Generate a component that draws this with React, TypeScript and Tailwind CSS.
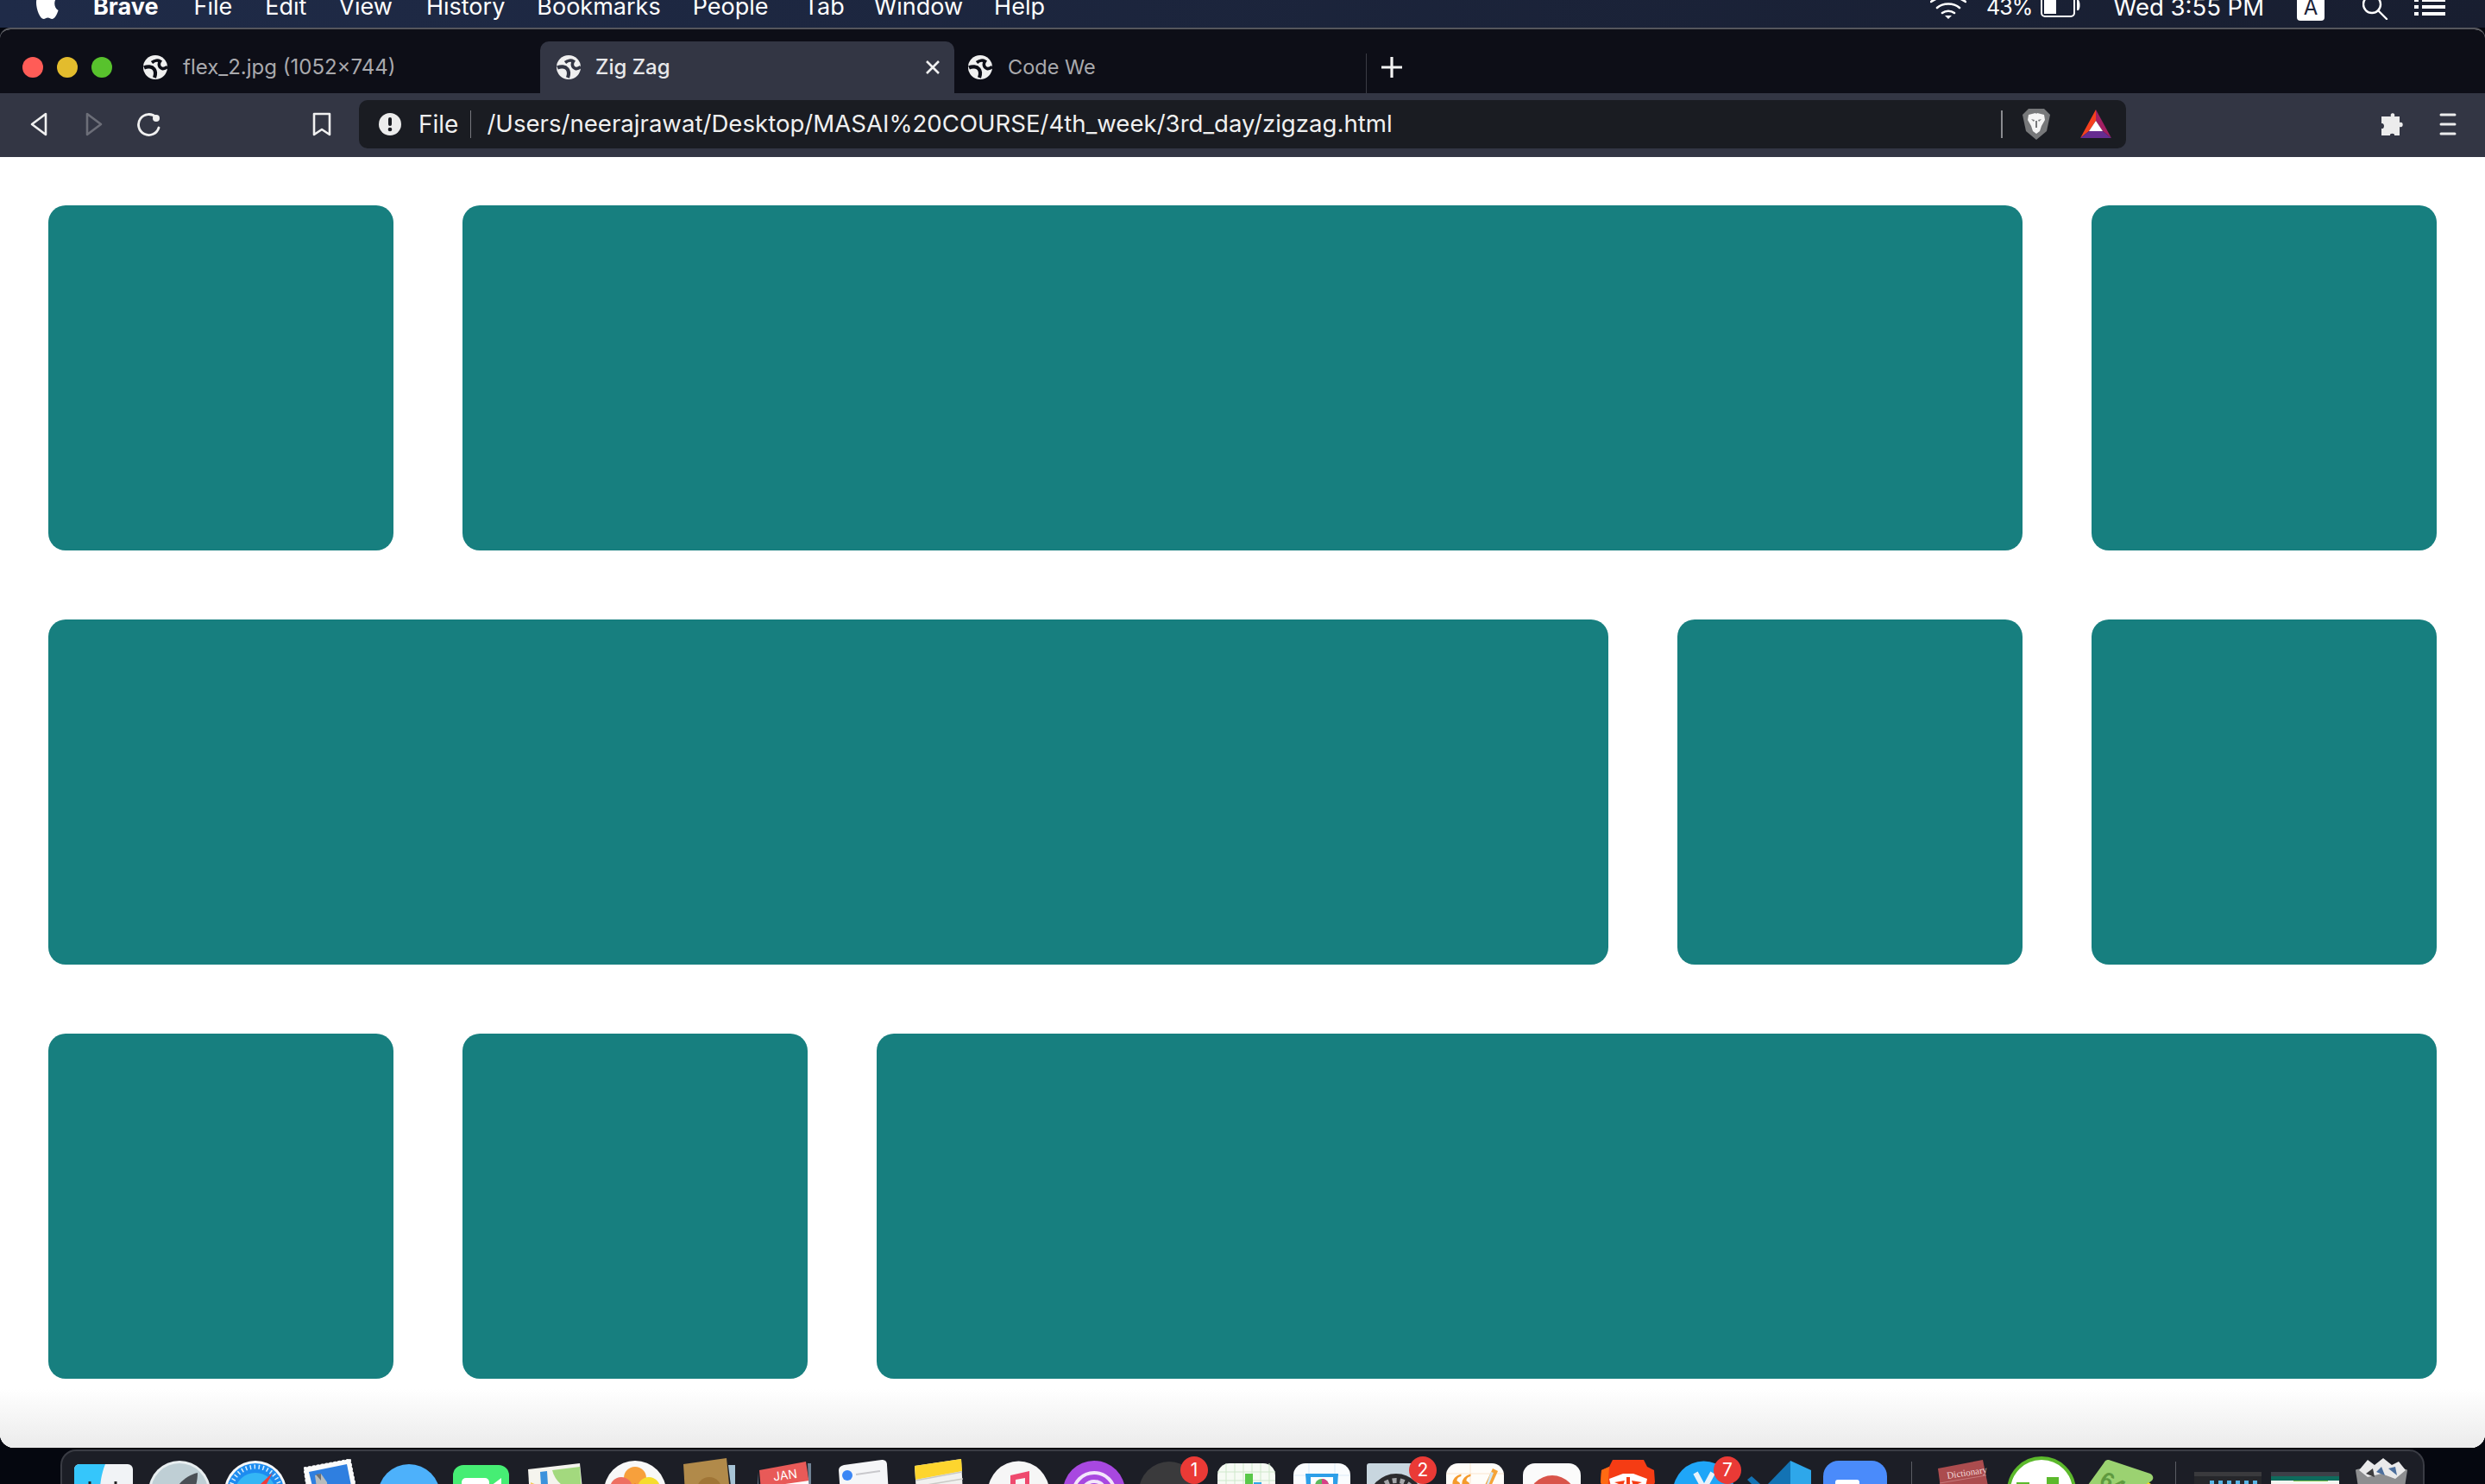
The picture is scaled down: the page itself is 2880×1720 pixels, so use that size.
import React from "react";

const Globe = ({ c = "#0d0e17" }: { c?: string }) => (
  <svg width="30" height="30" viewBox="0 0 30 30" className="shrink-0">
    <circle cx="15" cy="15" r="14" fill="#f0f0f0" />
    <path d="M2 15.500C6 13.500 11 14 13.500 17C15 19 15.500 23 14 27" fill="none" stroke={c} strokeWidth="4.200" />
    <path d="M11 9.500C14 7 18 6.500 20.500 8C18.500 11 19 15 23 16.500C25 17 27 16 29 14.500" fill="none" stroke={c} strokeWidth="3.600" />
  </svg>
);

const Box = ({ className }: { className: string }) => (
  <div className={`h-[400px] rounded-[20px] bg-[#177f7f] ${className}`} />
);

const MenuItem = ({ children, className }: { children: React.ReactNode; className: string }) => (
  <span className={`shrink-0 ${className}`}>{children}</span>
);

const Badge = ({ n, className }: { n: string; className: string }) => (
  <span className={`absolute top-[6px] flex h-[32px] w-[32px] items-center justify-center rounded-full bg-[#ea3a36] text-[21px] text-white ${className}`}>
    {n}
  </span>
);

const Dock = () => (
  <div className="relative ml-[70px] mt-[2px] flex h-[40px] w-[2740px] items-start overflow-hidden rounded-t-[18px] border-x-2 border-t-2 border-[#3a3c44] bg-[#1c1e26]">
    {/* Finder */}
    <svg width="68" height="40" className="ml-[14px] mt-[15px] shrink-0">
      <rect width="68" height="60" rx="6" fill="#f1f3f6" />
      <path d="M6 0H36C32 10 30 20 29 40H0V6A6 6 0 0 1 6 0Z" fill="#35c6fb" />
      <path d="M18 20V30M48 20V30" stroke="#222" strokeWidth="3" />
    </svg>
    {/* Launchpad */}
    <svg width="72" height="40" className="ml-[18px] mt-[11px] shrink-0">
      <circle cx="36" cy="36" r="36" fill="#e8eef0" />
      <circle cx="36" cy="36" r="33" fill="#bfcfd5" />
      <path d="M57 14C44 17 34 26 28 40H50C54 33 57 25 57 14Z" fill="#4a4f55" />
    </svg>
    {/* Safari */}
    <svg width="72" height="40" className="ml-[16px] mt-[11px] shrink-0">
      <circle cx="36" cy="36" r="36" fill="#f5f7f8" />
      <circle cx="36" cy="36" r="33" fill="#1d8cf0" />
      <circle cx="36" cy="38" r="24" fill="#34b6f5" />
      <circle cx="36" cy="36" r="29" fill="none" stroke="#d8eefc" strokeWidth="5" strokeDasharray="1.5 3.5" />
      <path d="M56 14L28 40H42Z" fill="#ef3b3b" />
    </svg>
    {/* Mail */}
    <svg width="60" height="40" className="ml-[20px] mt-[9px] shrink-0">
      <path d="M0 10L54 0L60 30V40H4Z" fill="#fbfbfb" stroke="#fff" strokeWidth="1" strokeDasharray="3 2" />
      <path d="M6 15L50 6L56 36V40H12Z" fill="#2f7fe0" />
      <path d="M13 19L20 17L27 27L28 40H16Z" fill="#b8bcbc" />
      <path d="M14 18L20 17L20 25Z" fill="#6d7072" />
    </svg>
    {/* Messages */}
    <svg width="72" height="40" className="ml-[26px] mt-[15px] shrink-0">
      <ellipse cx="36" cy="36" rx="36" ry="36" fill="#4db1fb" />
    </svg>
    {/* FaceTime */}
    <svg width="65" height="40" className="ml-[15px] mt-[16px] shrink-0">
      <rect width="65" height="60" rx="12" fill="#46ee74" />
      <rect x="10" y="15" width="32" height="24" rx="5" fill="#fff" />
      <path d="M44 24L56 15V40H44Z" fill="#fff" />
    </svg>
    {/* Maps */}
    <svg width="64" height="40" className="ml-[22px] mt-[14px] shrink-0">
      <path d="M0 7L60 0L64 40H2Z" fill="#f5f4ee" />
      <path d="M14 10L22 9L24 40H16Z" fill="#3b92dc" />
      <path d="M28 8L60 4L62 32C46 32 32 24 28 8Z" fill="#a3d97e" />
      <path d="M3 22L12 26L16 40H4Z" fill="#f5cb52" />
    </svg>
    {/* Photos */}
    <svg width="72" height="40" className="ml-[24px] mt-[11px] shrink-0">
      <circle cx="36" cy="36" r="36" fill="#f8f8f8" />
      <circle cx="36" cy="20" r="13" fill="#f7a03c" />
      <circle cx="20" cy="32" r="13" fill="#ee6f62" />
      <circle cx="52" cy="32" r="13" fill="#f6dc2e" />
      <path d="M28 40L36 26L44 40Z" fill="#df5a25" />
    </svg>
    {/* Contacts */}
    <svg width="60" height="40" className="ml-[20px] mt-[8px] shrink-0">
      <path d="M0 7L50 0L54 40H2Z" fill="#b18a4a" />
      <path d="M52 8L60 8V40H56Z" fill="#a7c4d6" />
      <circle cx="30" cy="36" r="14" fill="#a07536" />
      <circle cx="30" cy="36" r="6" fill="#7f5a28" />
    </svg>
    {/* Calendar */}
    <svg width="62" height="40" className="ml-[26px] mt-[12px] shrink-0">
      <path d="M2 10L56 0L60 26L4 34Z" fill="#e85a58" />
      <path d="M4 30L60 22V40H4Z" fill="#fff" />
      <path d="M16 34H44V40H16Z" fill="#222" />
      <path d="M0 12L2 40H0ZM58 2L62 2V40H60Z" fill="#6f8294" />
      <text x="18" y="21" fontSize="14" fill="#fff" fontFamily="Inter, sans-serif" transform="rotate(-8 30 16)">JAN</text>
    </svg>
    {/* Reminders */}
    <svg width="58" height="40" className="ml-[32px] mt-[10px] shrink-0">
      <path d="M6 6L50 0C54 0 56 2 56 6L58 40H2L0 12C0 9 2 7 6 6Z" fill="#f5f6f8" />
      <circle cx="10" cy="18" r="6" fill="#3a86f5" />
      <path d="M20 17L48 13M20 34L48 30" stroke="#c8c8cc" strokeWidth="2" />
    </svg>
    {/* Notes */}
    <svg width="56" height="40" className="ml-[30px] mt-[9px] shrink-0">
      <path d="M0 8L54 0L56 40H2Z" fill="#f1f1ef" />
      <path d="M0 8L54 0L55 14L1 24Z" fill="#fdd52e" />
      <path d="M1 25L55 15M2 32L56 23" stroke="#c9c9c5" strokeWidth="1.5" />
    </svg>
    {/* Music */}
    <svg width="71" height="40" className="ml-[29px] mt-[11px] shrink-0">
      <circle cx="35.500" cy="36" r="35.500" fill="#f6f6f6" />
      <path d="M26 17L48 12V40H26Z" fill="#ef4a6e" />
      <path d="M32 22L43 20V28L32 30Z" fill="#f6f6f6" />
    </svg>
    {/* Podcasts */}
    <svg width="72" height="40" className="ml-[16px] mt-[11px] shrink-0">
      <circle cx="36" cy="36" r="36" fill="#a848e0" />
      <circle cx="36" cy="38" r="24" fill="none" stroke="#f3e6fb" strokeWidth="4" />
      <circle cx="36" cy="38" r="14" fill="none" stroke="#f3e6fb" strokeWidth="4" />
    </svg>
    {/* Dark clock */}
    <svg width="70" height="40" className="ml-[16px] mt-[11px] shrink-0">
      <circle cx="35" cy="36" r="35" fill="#3a3a3c" />
      <path d="M26 34L22 40M44 34L48 40" stroke="#eee" strokeWidth="3" />
    </svg>
    {/* Numbers */}
    <svg width="67" height="40" className="ml-[21px] mt-[14px] shrink-0">
      <rect width="67" height="60" rx="14" fill="#f6fbf4" />
      <path d="M0 10H67M0 20H67M10 0V40M20 0V40M30 0V40M40 0V40M50 0V40M60 0V40" stroke="#cfe8cb" strokeWidth="1" />
      <rect x="22" y="28" width="9" height="12" fill="#f2a33a" />
      <rect x="32" y="12" width="9" height="28" fill="#59c84a" />
      <rect x="42" y="22" width="9" height="18" fill="#2fa8e8" />
    </svg>
    {/* Keynote */}
    <svg width="66" height="40" className="ml-[21px] mt-[14px] shrink-0">
      <rect width="66" height="60" rx="14" fill="#fafcfe" />
      <path d="M0 14H66M18 0V40M48 0V40" stroke="#d9e9f6" strokeWidth="1" />
      <path d="M14 12H52L50 40H16Z" fill="#2d9fe8" />
      <rect x="20" y="16" width="26" height="24" fill="#fff" />
      <circle cx="33" cy="26" r="8" fill="#5cb85c" />
      <path d="M33 18A8 8 0 0 1 40 30L33 26Z" fill="#d83f87" />
    </svg>
    {/* SysPrefs */}
    <svg width="66" height="40" className="ml-[19px] mt-[14px] shrink-0">
      <rect width="66" height="60" rx="3" fill="#c8d6df" />
      <circle cx="34" cy="44" r="32" fill="#2b2b2d" />
      <circle cx="34" cy="44" r="24" fill="none" stroke="#a5a7aa" strokeWidth="6" strokeDasharray="5 4" />
    </svg>
    {/* Pages */}
    <svg width="67" height="40" className="ml-[26px] mt-[14px] shrink-0">
      <rect width="67" height="60" rx="14" fill="#fffdf9" />
      <path d="M0 12H67M28 0V40" stroke="#fbe6cf" strokeWidth="1" />
      <text x="5" y="46" fontSize="50" fill="#f49a2c" fontFamily="Liberation Serif, serif" fontWeight="700">“</text>
      <path d="M54 6L60 9L46 40H38Z" fill="#f5a337" />
      <path d="M52 10L55 11L44 38H42Z" fill="#cfe6f6" />
    </svg>
    {/* Chrome */}
    <svg width="67" height="40" className="ml-[22px] mt-[14px] shrink-0">
      <rect width="67" height="60" rx="14" fill="#fbfbfb" />
      <circle cx="34" cy="42" r="28" fill="#d9544a" />
      <path d="M34 42L62 32V50H40Z" fill="#e8b93c" />
      <path d="M34 42L6 36L6 70H34Z" fill="#47a85a" />
      <circle cx="34" cy="42" r="13" fill="#fff" />
    </svg>
    {/* Brave */}
    <svg width="63" height="40" className="ml-[23px] mt-[10px] shrink-0">
      <path d="M14 0H50L54 8L62 12L63 26L58 40H6L0 26L1 12L10 8Z" fill="#f53c14" />
      <path d="M0 26L1 12L10 8L8 40H6Z" fill="#ff6a12" />
      <path d="M10 22L26 16H38L54 22L50 40H14Z" fill="#fff" />
      <path d="M16 26L28 24L26 30ZM48 26L36 24L38 30Z" fill="#f53c14" />
      <path d="M30 20H34V38H30Z" fill="#f53c14" />
    </svg>
    {/* App Store */}
    <svg width="71" height="40" className="ml-[21px] mt-[11px] shrink-0">
      <circle cx="35.500" cy="36" r="35.500" fill="#1fa6f8" />
      <path d="M26 14L38 36M46 14L34 36" fill="none" stroke="#e9f2fa" strokeWidth="6" />
    </svg>
    {/* VS Code */}
    <svg width="75" height="40" className="ml-[15px] mt-[11px] shrink-0">
      <path d="M50 0L74 11V27H50Z" fill="#2ea7ea" />
      <path d="M50 0V27H24Z" fill="#1373b4" />
      <path d="M0 22L5 18L15 27H5Z" fill="#1373b4" />
    </svg>
    {/* Zoom */}
    <svg width="74" height="40" className="ml-[13px] mt-[11px] shrink-0">
      <rect width="74" height="60" rx="18" fill="#4a8bfb" />
      <rect x="14" y="22" width="28" height="12" rx="3" fill="#fff" />
    </svg>
    <div className="ml-[28px] mt-[12px] h-[30px] w-[1px] shrink-0 bg-[#5a5c63]" />
    {/* Dictionary */}
    <svg width="64" height="40" className="ml-[30px] mt-[10px] shrink-0">
      <path d="M0 10L52 0L60 40H4Z" fill="#ab4c4e" />
      <path d="M2 27L56 18" stroke="#c77a7b" strokeWidth="1" />
      <text x="10" y="19" fontSize="11" fill="#f3d9d9" fontFamily="Liberation Serif, serif" transform="rotate(-9 30 14)">Dictionary</text>
    </svg>
    {/* uTorrent */}
    <svg width="80" height="40" className="ml-[16px] mt-[6px] shrink-0">
      <circle cx="40" cy="40" r="38" fill="#fff" stroke="#5cb92c" strokeWidth="4" />
      <path d="M11 30H26V40H11ZM46 24H60V40H46Z" fill="#5cb92c" />
    </svg>
    {/* 64 bit */}
    <svg width="84" height="40" className="ml-[6px] mt-[10px] shrink-0">
      <path d="M32 0L80 16C84 18 84 22 82 24L60 40H0L26 4C28 0 30 0 32 0Z" fill="#9bd271" />
      <path d="M78 26L84 30L70 40H62Z" fill="#f4de1e" />
      <text x="22" y="38" fontSize="26" fontWeight="700" fill="#5f9a3f" fontFamily="Liberation Sans, sans-serif" transform="rotate(30 40 28)">64</text>
    </svg>
    <div className="ml-[25px] mt-[12px] h-[30px] w-[1px] shrink-0 bg-[#5a5c63]" />
    {/* Window thumbs */}
    <svg width="78" height="40" className="ml-[21px] mt-[24px] shrink-0">
      <rect width="78" height="20" fill="#26272b" />
      <rect width="78" height="5" fill="#3a3a3d" />
      <path d="M18 10h5v5h-5zM28 10h5v5h-5zM38 10h5v5h-5zM48 10h5v5h-5zM58 10h5v5h-5zM68 10h5v5h-5z" fill="#5bb6e6" />
    </svg>
    <svg width="79" height="40" className="ml-[11px] mt-[24px] shrink-0">
      <rect width="79" height="20" fill="#f5f6f1" />
      <rect width="79" height="5" fill="#3d4048" />
      <rect y="5" width="79" height="5" fill="#0e6b5c" />
      <rect x="26" y="10" width="40" height="1" fill="#86c94a" />
    </svg>
    {/* Trash */}
    <svg width="60" height="40" className="ml-[19px] mt-[8px] shrink-0">
      <path d="M0 14C0 10 60 10 60 14L56 40H4Z" fill="#8d8e90" />
      <path d="M4 14L14 2L22 8L32 0L42 8L50 4L58 14L46 24L30 18L14 22Z" fill="#e9e9ea" />
      <path d="M24 16L30 10L34 20ZM38 12L46 10L48 20Z" fill="#4c6f9d" />
      <path d="M12 18L20 12L22 22Z" fill="#3b3b3d" />
    </svg>
    <Badge n="1" className="left-[1296px]" />
    <Badge n="2" className="left-[1561px]" />
    <Badge n="7" className="left-[1914px]" />
  </div>
);

export default function App() {
  return (
    <div className="flex h-[1720px] w-[2880px] flex-col overflow-hidden bg-[#05070f] font-['Inter',sans-serif]">
      {/* Menu bar */}
      <div className="flex h-[32px] shrink-0 items-end overflow-hidden bg-gradient-to-r from-[#1f2b48] to-[#181e30] text-[27px] leading-[38px] text-white">
        <svg width="26" height="24" viewBox="0 0 30 24" preserveAspectRatio="none" className="mb-[10px] ml-[42px] shrink-0">
          <path d="M9 -6C3 -6 0 -1 0 5C0 13 5 24 10 24C12 24 13 22.500 15.500 22.500C18 22.500 19 24 21 24C25 24 28 18 29.500 14C26 12.500 24.500 9 24.500 6C24.500 2 27 0 28 -1C26 -5 22 -6 20 -6C18 -6 17 -5 15 -5C13 -5 11 -6 9 -6Z" fill="#fff" />
        </svg>
        <div className="flex translate-y-[-5px] items-end">
          <MenuItem className="ml-[40px] font-bold">Brave</MenuItem>
          <MenuItem className="ml-[41px]">File</MenuItem>
          <MenuItem className="ml-[38px]">Edit</MenuItem>
          <MenuItem className="ml-[37px]">View</MenuItem>
          <MenuItem className="ml-[39px]">History</MenuItem>
          <MenuItem className="ml-[37px]">Bookmarks</MenuItem>
          <MenuItem className="ml-[37px]">People</MenuItem>
          <MenuItem className="ml-[41px]">Tab</MenuItem>
          <MenuItem className="ml-[34px]">Window</MenuItem>
          <MenuItem className="ml-[36px]">Help</MenuItem>
        </div>
        <div className="ml-auto flex translate-y-[-5px] items-end">
          <svg width="42" height="24" viewBox="0 0 42 24" className="mb-[3px] shrink-0" fill="none" stroke="#fff" strokeWidth="2.600" strokeLinecap="round">
            <path d="M1 2C12 -6 30 -6 41 2M8 9C15 3 27 3 34 9M14 15C18 12 24 12 28 15" />
            <path d="M21 22L17 18H25Z" fill="#fff" stroke="none" />
          </svg>
          <span className="ml-[23px] shrink-0 text-[25px] tracking-[-1px]">43%</span>
          <svg width="46" height="24" viewBox="0 0 46 24" className="mb-[3px] ml-[10px] shrink-0">
            <rect x="1" y="-8" width="38" height="27" rx="4" fill="none" stroke="#fff" strokeWidth="2" />
            <rect x="4" y="-4" width="14" height="20" fill="#fff" />
            <path d="M42 0H44C46 3 46 9 44 12H42Z" fill="#fff" />
          </svg>
          <span className="ml-[38px] shrink-0 text-[27.500px]">Wed 3:55 PM</span>
          <span className="mb-[3px] ml-[38px] flex h-[40px] w-[32px] shrink-0 items-end justify-center rounded-b-[4px] bg-white pb-[3px] text-[24px] leading-[24px] text-[#1c2338]">
            A
          </span>
          <svg width="30" height="24" viewBox="0 0 30 24" fill="none" stroke="#fff" strokeWidth="2.400" className="mb-[4px] ml-[44px] shrink-0">
            <circle cx="11" cy="6" r="10" />
            <path d="M18 13L28 23" strokeLinecap="round" />
          </svg>
          <svg width="36" height="20" viewBox="0 0 36 20" fill="#fff" className="mb-[8px] ml-[30px] mr-[46px] shrink-0">
            <path d="M0 0H5V3H0ZM9 0H36V3H9ZM0 7H5V11H0ZM9 7H36V11H9ZM0 15H5V19H0ZM9 15H36V19H9Z" />
          </svg>
        </div>
      </div>

      {/* Window */}
      <div className="flex h-[1646px] shrink-0 flex-col overflow-hidden rounded-b-[16px] rounded-t-[12px] border-t-2 border-[#55565c] bg-white">
        {/* Tab strip */}
        <div className="flex h-[74px] shrink-0 items-end bg-[#0d0e17] text-[24px]">
          <div className="flex h-[60px] w-[626px] shrink-0 items-center">
            <span className="ml-[26px] h-[24px] w-[24px] rounded-full bg-[#ff5c57]" />
            <span className="ml-[16px] h-[24px] w-[24px] rounded-full bg-[#e3bc2d]" />
            <span className="ml-[16px] h-[24px] w-[24px] rounded-full bg-[#58c22d]" />
            <span className="ml-[35px] flex items-center">
              <Globe />
            </span>
            <span className="ml-[17px] whitespace-nowrap text-[#a9a9ad]">flex_2.jpg (1052×744)</span>
          </div>
          <div className="flex h-[60px] w-[480px] shrink-0 items-center rounded-t-[10px] bg-[#333644]">
            <span className="ml-[18px]">
              <Globe c="#333644" />
            </span>
            <span className="ml-[16px] font-medium text-[#e8e8ea]">Zig Zag</span>
            <svg width="18" height="18" viewBox="0 0 18 18" className="ml-auto mr-[16px]" stroke="#f0f0f0" strokeWidth="2.600">
              <path d="M2 2L16 16M16 2L2 16" />
            </svg>
          </div>
          <div className="flex h-[60px] w-[477px] shrink-0 items-center">
            <span className="ml-[15px]">
              <Globe />
            </span>
            <span className="ml-[17px] text-[23.500px] text-[#a9a9ad]">Code We</span>
          </div>
          <div className="h-[46px] w-[1px] shrink-0 bg-[#3a3b44]" />
          <svg width="26" height="26" viewBox="0 0 26 26" className="mb-[17px] ml-[16px] shrink-0" stroke="#f4f4f4" strokeWidth="3.200">
            <path d="M13 1V25M1 13H25" />
          </svg>
        </div>

        {/* Toolbar */}
        <div className="flex h-[74px] shrink-0 items-center bg-[#333644] pb-[2px]">
          <svg width="20" height="28" viewBox="0 0 20 28" className="ml-[35px] shrink-0" fill="none" stroke="#f0f0f0" strokeWidth="2.600" strokeLinejoin="round">
            <path d="M18 2V26L2 14Z" />
          </svg>
          <svg width="20" height="28" viewBox="0 0 20 28" className="ml-[44px] shrink-0" fill="none" stroke="#6c6e78" strokeWidth="2.600" strokeLinejoin="round">
            <path d="M2 2V26L18 14Z" />
          </svg>
          <svg width="30" height="28" viewBox="0 0 30 28" className="ml-[39px] shrink-0" fill="none" stroke="#f0f0f0" strokeWidth="2.800" strokeLinecap="round">
            <path d="M23 6A12 12 0 1 0 26 18" />
            <circle cx="23" cy="7" r="4" fill="#f0f0f0" stroke="none" />
          </svg>
          <svg width="22" height="28" viewBox="0 0 22 28" className="ml-[174px] shrink-0" fill="none" stroke="#f0f0f0" strokeWidth="2.600" strokeLinejoin="round">
            <path d="M2 2H20V26L11 20L2 26Z" />
          </svg>
          <div className="ml-[32px] flex h-[56px] w-[2048px] shrink-0 items-center rounded-[10px] bg-[#1a1c22] text-[28px] text-[#f0f0f0]">
            <svg width="28" height="28" viewBox="0 0 28 28" className="ml-[22px] shrink-0">
              <circle cx="14" cy="14" r="13" fill="#ececec" />
              <rect x="12" y="6" width="4" height="10" rx="2" fill="#1a1c22" />
              <circle cx="14" cy="20" r="2.300" fill="#1a1c22" />
            </svg>
            <span className="ml-[19px] shrink-0">File</span>
            <div className="ml-[14px] h-[32px] w-[1px] shrink-0 bg-[#77787e]" />
            <span className="ml-[18px] whitespace-nowrap text-[27.600px]">/Users/neerajrawat/Desktop/MASAI%20COURSE/4th_week/3rd_day/zigzag.html</span>
            <div className="ml-auto h-[32px] w-[2px] shrink-0 bg-[#8a8b90]" />
            <svg width="32" height="36" viewBox="0 0 32 36" className="ml-[23px] shrink-0">
              <path d="M7 0H25L32 7L28 26L16 36L4 26L0 7Z" fill="#77787a" />
              <path d="M7 7L15 5L16 6L17 5L25 7L26 13L22 20L20 26L16 29L12 26L10 20L6 13Z" fill="#f5f5f5" />
              <path d="M10 12L14 13L13 15ZM22 12L18 13L19 15ZM15 14H17V22H15Z" fill="#77787a" />
            </svg>
            <svg width="38" height="34" viewBox="0 0 38 34" className="ml-[34px] mr-[16px] shrink-0">
              <path d="M19 0L1 33L11 25L19 13Z" fill="#f5401e" />
              <path d="M19 0L37 33L27 25L19 13Z" fill="#a21f63" />
              <path d="M1 33H37L27 25H11Z" fill="#662d91" />
              <path d="M19 13L11 25H27Z" fill="#fff" />
            </svg>
          </div>
          <svg width="30" height="30" viewBox="0 0 30 30" className="ml-[294px] shrink-0" fill="#ececec">
            <path d="M10 6H13C11 1 19 1 17 6H23V13C28 11 28 20 23 18V28H17C18 25 11 25 12 28H2V20C6 21 6 13 2 14V6Z" />
          </svg>
          <svg width="20" height="26" viewBox="0 0 20 26" className="ml-[39px] shrink-0" stroke="#ececec" strokeWidth="3" strokeLinecap="round">
            <path d="M2 2H18M2 13H18M2 24H18" />
          </svg>
        </div>

        {/* Page */}
        <div className="flex flex-1 flex-col gap-[80px] bg-white px-[56px] pt-[56px]">
          <div className="flex gap-[80px]">
            <Box className="w-[400px]" />
            <Box className="w-[1808px]" />
            <Box className="w-[400px]" />
          </div>
          <div className="flex gap-[80px]">
            <Box className="w-[1808px]" />
            <Box className="w-[400px]" />
            <Box className="w-[400px]" />
          </div>
          <div className="flex gap-[80px]">
            <Box className="w-[400px]" />
            <Box className="w-[400px]" />
            <Box className="w-[1808px]" />
          </div>
          <div className="-mx-[56px] -mt-[80px] flex-1 bg-gradient-to-b from-white from-[15%] to-[#ebebeb]" />
        </div>
      </div>
      <Dock />
    </div>
  );
}
